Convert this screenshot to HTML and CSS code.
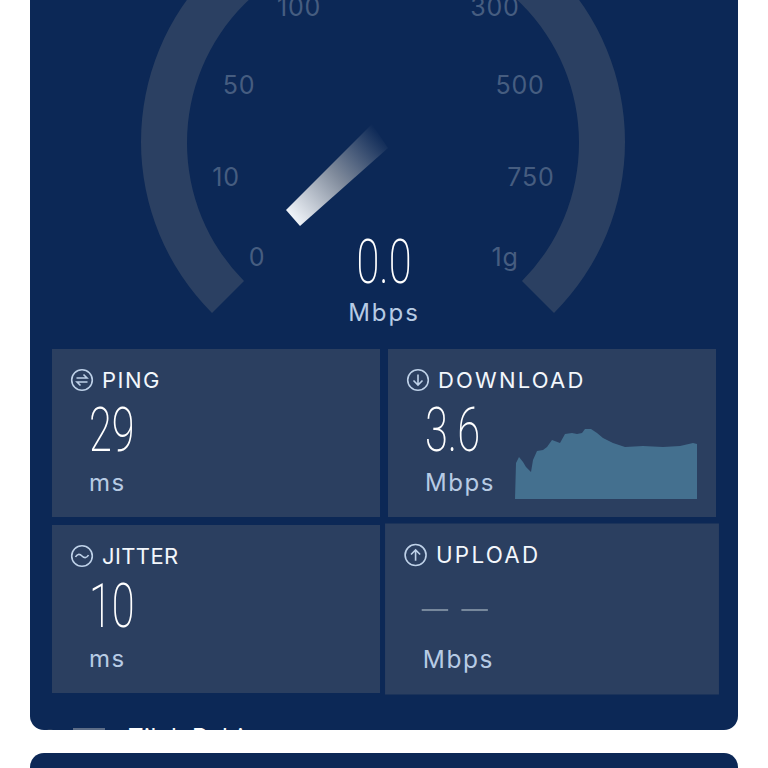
FILE: index.html
```html
<!DOCTYPE html>
<html lang="en">
<head>
    <meta charset="UTF-8">
    <meta name="viewport" content="width=device-width, initial-scale=1.0">
    <title>Speed Test</title>
    <link rel="stylesheet" href="styles.css">
</head>
<body>

<div class="page">
    <section class="test-card">
        <div class="gauge">
            <svg class="gauge-svg" width="708" height="330" viewBox="0 0 708 330">
                <defs>
                    <linearGradient id="needleFade" gradientUnits="userSpaceOnUse" x1="262" y1="218" x2="353" y2="136">
                        <stop offset="0" stop-color="#f1f5fa"/>
                        <stop offset="0.5" stop-color="#7f8a9b"/>
                        <stop offset="1" stop-color="#0c2856"/>
                    </linearGradient>
                </defs>
                <path class="gauge-track" d="M182 313 A242 242 0 1 1 524 313 L492 281 A196 196 0 1 0 214 281 Z"/>
                <polygon points="256,210 270,226 358,148 342,124" fill="url(#needleFade)"/>
                <g class="gauge-labels">
                    <text x="227" y="266" text-anchor="middle">0</text>
                    <text x="196" y="186" text-anchor="middle">10</text>
                    <text x="209" y="94" text-anchor="middle">50</text>
                    <text x="269" y="16" text-anchor="middle">100</text>
                    <text x="465" y="16" text-anchor="middle">300</text>
                    <text x="490" y="94" text-anchor="middle">500</text>
                    <text x="501" y="186" text-anchor="middle">750</text>
                    <text x="475" y="266" text-anchor="middle">1g</text>
                </g>
            </svg>
            <div class="gauge-value">
                <div class="big-num">0.0</div>
                <div class="gauge-unit">Mbps</div>
            </div>
        </div>

        <div class="stats">
            <div class="stat">
                <div class="stat-head">
                    <svg class="stat-icon" width="24" height="24" viewBox="0 0 24 24">
                        <circle cx="12" cy="12" r="10.3"/>
                        <path d="M6.5 10H17L13.5 6.5M17.5 14H7L10.5 17.5"/>
                    </svg>
                    <span>PING</span>
                </div>
                <div class="stat-body">
                    <div class="big-num">29</div>
                    <div class="stat-unit">ms</div>
                </div>
            </div>

            <div class="stat">
                <div class="stat-head">
                    <svg class="stat-icon" width="24" height="24" viewBox="0 0 24 24">
                        <circle cx="12" cy="12" r="10.3"/>
                        <path d="M12 6.5V17M7.5 12.5L12 17L16.5 12.5"/>
                    </svg>
                    <span class="label-wide">DOWNLOAD</span>
                </div>
                <div class="stat-body">
                    <div class="big-num">3.6</div>
                    <div class="stat-unit">Mbps</div>
                </div>
                <svg class="spark" width="184" height="72" viewBox="0 0 184 72">
                    <path d="M1 72 L2 36 L5 30 L9 35 L12 40 L17 45 L19 33 L23 24 L29 23 L33 20 L38 13 L46 16 L51 7 L58 6 L63 7 L68 6 L71 2 L77 2 L83 6 L89 11 L99 16 L111 20 L129 19 L149 20 L166 19 L179 16 L183 17 L183 72 Z"/>
                </svg>
            </div>

            <div class="stat">
                <div class="stat-head">
                    <svg class="stat-icon" width="24" height="24" viewBox="0 0 24 24">
                        <circle cx="12" cy="12" r="10.3"/>
                        <path d="M5.5 13C7 10 9.5 9.5 12 12C14.5 14.5 17 14 18.5 11"/>
                    </svg>
                    <span class="label-narrow">JITTER</span>
                </div>
                <div class="stat-body">
                    <div class="big-num">10</div>
                    <div class="stat-unit">ms</div>
                </div>
            </div>

            <div class="stat stat-active">
                <div class="stat-head">
                    <svg class="stat-icon" width="24" height="24" viewBox="0 0 24 24">
                        <circle cx="12" cy="12" r="10.3"/>
                        <path d="M12 17.5V7M7.5 11.5L12 7L16.5 11.5"/>
                    </svg>
                    <span class="label-wide">UPLOAD</span>
                </div>
                <div class="stat-body">
                    <div class="dashes"><i></i><i></i></div>
                    <div class="stat-unit">Mbps</div>
                </div>
            </div>
        </div>

        <div class="cut-off">
            <span class="cut-dot"></span>
            <span class="cut-bar"></span>
            <span class="cut-text">Tilak Rabi</span>
        </div>
    </section>

    <section class="next-card"></section>
</div>

</body>
</html>
```
FILE: styles.css
```css
body {
    margin: 0;
    background: white;
    font-family: Inter, "Open Sans", sans-serif;
    overflow: hidden;
}

.page {
    height: 768px;
    padding: 0 30px;
    box-sizing: border-box;
    overflow: hidden;
}

.test-card {
    height: 730px;
    background: #0c2856;
    border-radius: 0 0 14px 14px;
    overflow: hidden;
    color: white;
}

.next-card {
    height: 60px;
    margin-top: 23px;
    background: #0c2856;
    border-radius: 14px 14px 0 0;
}

.gauge {
    position: relative;
    height: 349px;
}

.gauge-svg {
    display: block;
}

.gauge-track {
    fill: #2b4062;
}

.gauge-labels text {
    font-size: 25px;
    letter-spacing: .8px;
    fill: #465d80;
}

.gauge-value {
    position: absolute;
    left: 0;
    right: 0;
    top: 227px;
    text-align: center;
}

.gauge-unit {
    margin-top: 1px;
    font-size: 24px;
    letter-spacing: 2px;
    color: #b7cbe4;
}

.big-num {
    font-family: Roboto, sans-serif;
    font-weight: 200;
    font-size: 62px;
    line-height: 70px;
    height: 70px;
    transform: scaleX(.67);
    color: white;
}

.stats {
    display: grid;
    grid-template-columns: 328px 328px;
    grid-auto-rows: 168px;
    gap: 8px;
    padding: 0 22px;
}

.stat {
    position: relative;
    background: #2b3f60;
    padding: 18px 18px 0;
    box-sizing: border-box;
}

.stat-active {
    transform: scale(1.018);
}

.stat-head {
    display: flex;
    align-items: center;
    gap: 8px;
    font-size: 22px;
    line-height: 26px;
    letter-spacing: 1.5px;
    color: #f3f7fc;
}

.label-wide {
    letter-spacing: 2.2px;
}

.label-narrow {
    letter-spacing: .4px;
}

.stat-icon {
    fill: none;
    stroke: #bed1e8;
    stroke-width: 1.6;
}

.stat-body {
    padding: 2px 0 0 19px;
}

.stat-body .big-num {
    width: 50px;
    transform-origin: left center;
    white-space: nowrap;
}

.stat-unit {
    margin-top: 3px;
    font-size: 24px;
    line-height: 30px;
    letter-spacing: 1.6px;
    color: #b7cbe4;
}

.dashes {
    display: flex;
    gap: 13px;
    height: 70px;
    padding-top: 8px;
    margin-left: -1px;
    box-sizing: border-box;
    align-items: center;
}

.dashes i {
    width: 26px;
    height: 2px;
    background: #77889c;
}

.spark {
    position: absolute;
    right: 18px;
    bottom: 18px;
    fill: #44708f;
}

.cut-off {
    display: flex;
    align-items: flex-start;
    height: 30px;
    margin-top: 35px;
    padding-left: 16px;
}

.cut-dot {
    width: 8px;
    height: 8px;
    margin-top: 1px;
    background: #2b4062;
    border-radius: 50%;
}

.cut-bar {
    width: 32px;
    height: 3px;
    margin: 0 0 0 19px;
    background: #5d6d87;
}

.cut-text {
    margin-left: 23px;
    font-size: 24px;
    line-height: 20px;
    letter-spacing: .6px;
    color: white;
}
```
